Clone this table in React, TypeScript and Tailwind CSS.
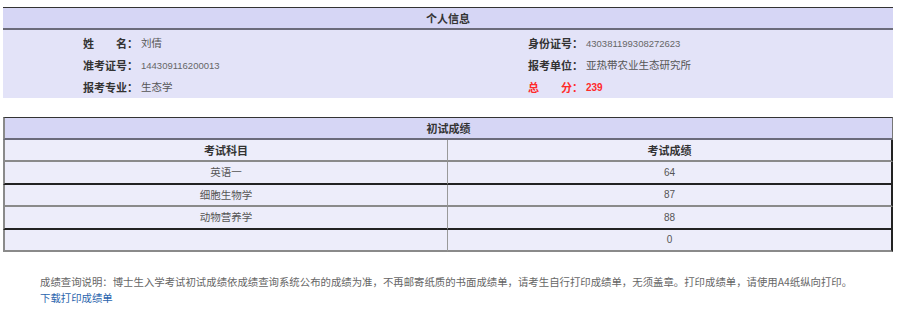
import React from "react";

const cjk = "font-['Noto_Sans_CJK_SC','Noto_Sans',sans-serif]";
const num = "font-['Liberation_Sans','Noto_Sans_CJK_SC',sans-serif]";

interface InfoProps {
  label: React.ReactNode;
  value: React.ReactNode;
  red?: boolean;
}

const InfoItem: React.FC<InfoProps> = ({ label, value, red }) => {
  return (
    <div className="flex items-center h-[22px] pl-[80px]">
      <div
        className={`flex items-center w-[55px] shrink-0 font-bold text-[11px] ${
          red ? "text-[#ff2a2a]" : "text-[#333]"
        }`}
      >
        {label}
      </div>
      <div
        className={`ml-[3px] text-[10.5px] ${
          red ? "text-[#ff2a2a] font-bold" : "text-[#555]"
        }`}
      >
        {value}
      </div>
    </div>
  );
};

const Spread: React.FC<{ a: string; b: string }> = ({ a, b }) => (
  <>
    <span className="flex justify-between w-[44px]">
      <span>{a}</span>
      <span>{b}</span>
    </span>
    <span>：</span>
  </>
);

const scores = [
  { subject: "英语一", score: "64" },
  { subject: "细胞生物学", score: "87" },
  { subject: "动物营养学", score: "88" },
  { subject: "", score: "0" }
];

const App: React.FC = () => {
  return (
    <div className={`w-[900px] h-[311px] bg-white px-[3px] pt-[7px] ${cjk}`}>
      {/* 个人信息 */}
      <div className="w-[890px]">
        <div className="h-[23px] bg-[#d6d6f5] border-t border-t-[#333] border-b-2 border-b-[#6b6b7a] flex items-center justify-center text-[11px] font-bold text-[#333]">
          个人信息
        </div>
        <div className="bg-[#e3e3f8] pt-[2px] grid grid-cols-2">
          <div>
            <InfoItem label={<Spread a="姓" b="名" />} value="刘倩" />
            <InfoItem
              label="准考证号："
              value={<span className={`${num} text-[9.5px] text-[#666]`}>144309116200013</span>}
            />
            <InfoItem label="报考专业：" value="生态学" />
          </div>
          <div>
            <InfoItem
              label="身份证号："
              value={<span className={`${num} text-[9.5px] text-[#666]`}>430381199308272623</span>}
            />
            <InfoItem label="报考单位：" value="亚热带农业生态研究所" />
            <InfoItem
              red
              label={<Spread a="总" b="分" />}
              value={<span className={`${num} text-[10px]`}>239</span>}
            />
          </div>
        </div>
      </div>

      {/* 初试成绩 */}
      <table className="mt-[19px] w-[890px] border-separate border-spacing-0 table-fixed text-[10.5px]">
        <thead>
          <tr className="h-[23px] bg-[#d6d6f5]">
            <th
              colSpan={2}
              className="border-t border-t-[#333] border-l-2 border-l-[#8a8a8a] border-r border-r-[#777] border-b-2 border-b-[#6b6b7a] font-bold text-[11px] text-[#333]"
            >
              初试成绩
            </th>
          </tr>
          <tr className="h-[22px] bg-[#ededfa]">
            <th className="w-[444px] border-l-2 border-l-[#8a8a8a] border-r border-r-[#999] border-b-2 border-b-[#8a8a8a] font-bold text-[11px] text-[#333]">
              考试科目
            </th>
            <th className="border-r-2 border-r-[#222] border-b-2 border-b-[#8a8a8a] font-bold text-[11px] text-[#333]">
              考试成绩
            </th>
          </tr>
        </thead>
        <tbody>
          {scores.map((s, i) => {
            const bottom =
              i % 2 === 0
                ? "border-b-2 border-b-[#222]"
                : "border-b-2 border-b-[#8a8a8a]";
            return (
              <tr key={i} className="h-[22.5px] bg-[#ededfa] text-[#555]">
                <td
                  className={`text-center border-l-2 border-l-[#8a8a8a] border-r border-r-[#999] ${
                    i === scores.length - 1 ? "border-b-2 border-b-[#8a8a8a]" : bottom
                  }`}
                >
                  {s.subject}
                </td>
                <td
                  className={`text-center border-r-2 border-r-[#222] ${
                    i === scores.length - 1 ? "border-b-2 border-b-[#8a8a8a]" : bottom
                  } ${num} text-[10px]`}
                >
                  {s.score}
                </td>
              </tr>
            );
          })}
        </tbody>
      </table>

      <div className="mt-[22px] pl-[37px] text-[10.4px] leading-[16px]">
        <p className="text-[#666]">
          成绩查询说明：博士生入学考试初试成绩依成绩查询系统公布的成绩为准，不再邮寄纸质的书面成绩单，请考生自行打印成绩单，无须盖章。打印成绩单，请使用A4纸纵向打印。
        </p>
        <a href="#" className="text-[#2a64ad]">
          下载打印成绩单
        </a>
      </div>
    </div>
  );
};

export default App;
